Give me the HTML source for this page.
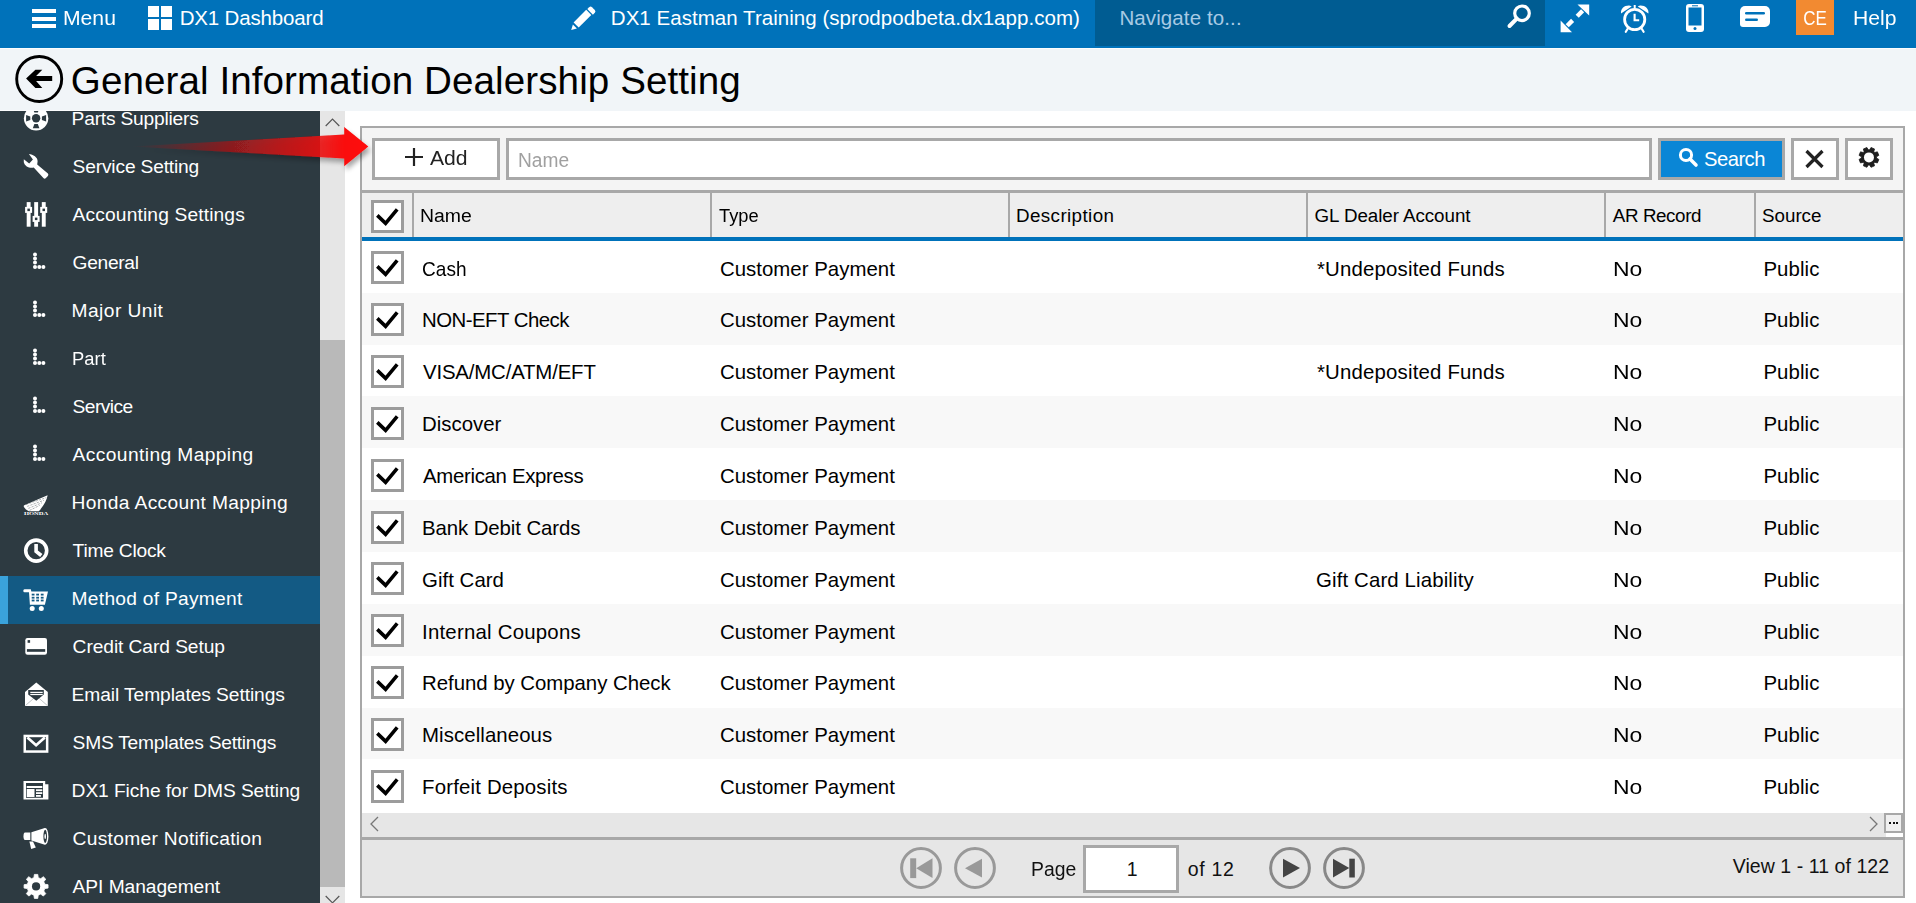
<!DOCTYPE html>
<html><head><meta charset="utf-8"><style>
html,body{margin:0;padding:0;}
body{width:1916px;height:903px;position:relative;overflow:hidden;font-family:"Liberation Sans", sans-serif;background:#fff;}
.t{position:absolute;white-space:nowrap;line-height:1;}
</style></head><body>
<div style="position:absolute;left:0;top:0;width:1916px;height:48px;background:#0072BA"></div>
<div style="position:absolute;left:32px;top:9px;width:23.5px;height:4px;background:#fff"></div>
<div style="position:absolute;left:32px;top:16.5px;width:23.5px;height:4px;background:#fff"></div>
<div style="position:absolute;left:32px;top:24px;width:23.5px;height:4px;background:#fff"></div>
<div class="t" style="left:62.80px;top:7.65px;font-size:20.5px;color:#fff;transform:scaleX(1.0325);transform-origin:1.00px 0;">Menu</div>
<div style="position:absolute;left:148px;top:6px;width:11px;height:11px;background:#fff"></div>
<div style="position:absolute;left:161px;top:6px;width:11px;height:11px;background:#fff"></div>
<div style="position:absolute;left:148px;top:19px;width:11px;height:11px;background:#fff"></div>
<div style="position:absolute;left:161px;top:19px;width:11px;height:11px;background:#fff"></div>
<div class="t" style="left:179.70px;top:7.65px;font-size:20.5px;color:#fff;letter-spacing:-0.163px;">DX1 Dashboard</div>
<svg style="position:absolute;left:560px;top:0px" width="40" height="40" viewBox="560 0 40 40"><path d="M571.2 30 L572.9 24.6 L576.9 28.6 Z" fill="#fff"/><path d="M573.6 22.4 L586.2 9.8 L591.3 14.9 L578.7 27.5 Z" fill="#fff"/><path d="M587.3 9.1 L589.2 7.2 Q590.6 5.9 592 7.2 L594.8 10 Q596.1 11.4 594.8 12.8 L592.9 14.7 Z" fill="#fff"/></svg>
<div class="t" style="left:610.80px;top:7.65px;font-size:20.5px;color:#fff;letter-spacing:0.041px;">DX1 Eastman Training (sprodpodbeta.dx1app.com)</div>
<div style="position:absolute;left:1095px;top:0;width:450px;height:46px;background:#005C92"></div>
<div class="t" style="left:1119.40px;top:7.65px;font-size:20.5px;color:#A8CAE4;letter-spacing:0.108px;">Navigate to...</div>
<svg style="position:absolute;left:1504px;top:2px" width="30" height="30" viewBox="0 0 30 30"><circle cx="18" cy="11.3" r="7.3" fill="none" stroke="#fff" stroke-width="3.2"/><line x1="12.8" y1="16.6" x2="5.5" y2="24" stroke="#fff" stroke-width="4" stroke-linecap="round"/></svg>
<svg style="position:absolute;left:1560px;top:4px" width="30" height="29" viewBox="0 0 30 29"><path d="M17.5 0.4 L29.2 0.4 L29.2 11.6 Z" fill="#fff"/><path d="M22.6 6.8 L17.2 12.2" stroke="#fff" stroke-width="4.4"/><path d="M0.6 28.2 L0.6 16.6 L12 28.2 Z" fill="#fff"/><path d="M7.2 21.8 L12.6 16.4" stroke="#fff" stroke-width="4.4"/></svg>
<svg style="position:absolute;left:1620px;top:4px" width="30" height="30" viewBox="0 0 30 30"><circle cx="14.7" cy="15.5" r="10.1" fill="none" stroke="#fff" stroke-width="2.8"/><path d="M14.6 9.8 V16.2 H19.2" fill="none" stroke="#fff" stroke-width="2.1"/><path d="M1 9.6 C0.4 4.6 4.2 1.2 9.2 1.4 C10.6 1.5 11.4 2 11.6 2.6 Z" fill="#fff"/><path d="M28.4 9.6 C29 4.6 25.2 1.2 20.2 1.4 C18.8 1.5 18 2 17.8 2.6 Z" fill="#fff"/><path d="M7.5 25 L5.8 27.8 M21.9 25 L23.6 27.8" stroke="#fff" stroke-width="2.2" stroke-linecap="round"/><rect x="13.7" y="1" width="2" height="3" fill="#fff"/></svg>
<svg style="position:absolute;left:1686px;top:4px" width="19" height="29" viewBox="0 0 19 29"><rect x="0" y="0" width="18" height="28" rx="3" fill="#fff"/><rect x="2.5" y="3.5" width="13" height="18" fill="#0072BA"/><circle cx="9" cy="24.5" r="1.5" fill="#0072BA"/><rect x="6" y="1.3" width="6" height="1" fill="#0072BA"/></svg>
<svg style="position:absolute;left:1740px;top:6px" width="30" height="23" viewBox="0 0 30 23"><path d="M5 0 H25 A5 5 0 0 1 30 5 V16 A5 5 0 0 1 25 21 H3 A3 3 0 0 1 0 18 V5 A5 5 0 0 1 5 0 Z" fill="#fff"/><rect x="5" y="6" width="20" height="2.6" rx="1.3" fill="#0072BA"/><rect x="5" y="12.5" width="13" height="2.6" rx="1.3" fill="#0072BA"/></svg>
<div style="position:absolute;left:1796px;top:0;width:38px;height:35px;background:#F28A31"></div>
<div class="t" style="left:1802.80px;top:7.85px;font-size:20.5px;color:#fff;transform:scaleX(0.8282);transform-origin:1.00px 0;">CE</div>
<div class="t" style="left:1853.00px;top:7.85px;font-size:20.5px;color:#fff;transform:scaleX(1.0304);transform-origin:1.00px 0;">Help</div>
<div style="position:absolute;left:0;top:48px;width:1916px;height:63px;background:#F1F5F8"></div>
<div style="position:absolute;left:0;top:48px;width:1916px;height:1px;background:#FCFDFE"></div>
<div style="position:absolute;left:0;top:110px;width:320px;height:1px;background:#FAFBFC"></div>
<svg style="position:absolute;left:13px;top:53px" width="52" height="52" viewBox="0 0 52 52"><circle cx="26.2" cy="26" r="22.5" fill="none" stroke="#000" stroke-width="2.9"/><path d="M13.1 25.6 L22.4 16.7 L29.3 16.7 L23.1 22.9 L39.2 22.9 L39.2 28.1 L23.1 28.1 L29.3 34.9 L22.4 34.9 Z" fill="#000"/></svg>
<div class="t" style="left:70.80px;top:62.13px;font-size:38.6px;color:#000;letter-spacing:0.082px;">General Information Dealership Setting</div>
<div style="position:absolute;left:0;top:111px;width:320px;height:792px;background:#2D3A41;overflow:hidden" id="sb">
<div class="t" style="left:71.60px;top:-2.25px;font-size:19.2px;color:#fff;letter-spacing:-0.208px;">Parts Suppliers</div>
<div class="t" style="left:72.60px;top:45.75px;font-size:19.2px;color:#fff;letter-spacing:-0.170px;">Service Setting</div>
<div class="t" style="left:72.60px;top:93.75px;font-size:19.2px;color:#fff;letter-spacing:0.144px;">Accounting Settings</div>
<div class="t" style="left:72.60px;top:141.75px;font-size:19.2px;color:#fff;letter-spacing:-0.316px;">General</div>
<div class="t" style="left:71.60px;top:189.75px;font-size:19.2px;color:#fff;letter-spacing:0.433px;">Major Unit</div>
<div class="t" style="left:71.60px;top:237.75px;font-size:19.2px;color:#fff;transform:scaleX(0.9582);transform-origin:1.00px 0;">Part</div>
<div class="t" style="left:72.60px;top:285.75px;font-size:19.2px;color:#fff;letter-spacing:-0.568px;">Service</div>
<div class="t" style="left:72.60px;top:333.75px;font-size:19.2px;color:#fff;letter-spacing:0.400px;">Accounting Mapping</div>
<div class="t" style="left:71.60px;top:381.75px;font-size:19.2px;color:#fff;letter-spacing:0.347px;">Honda Account Mapping</div>
<div class="t" style="left:72.60px;top:429.75px;font-size:19.2px;color:#fff;letter-spacing:-0.216px;">Time Clock</div>
<div style="position:absolute;left:0;top:465px;width:320px;height:48px;background:#135A84"></div>
<div style="position:absolute;left:0;top:465px;width:8px;height:48px;background:#3AA3DC"></div>
<div class="t" style="left:71.60px;top:477.75px;font-size:19.2px;color:#fff;letter-spacing:0.266px;">Method of Payment</div>
<div class="t" style="left:72.60px;top:525.75px;font-size:19.2px;color:#fff;letter-spacing:-0.075px;">Credit Card Setup</div>
<div class="t" style="left:71.60px;top:573.75px;font-size:19.2px;color:#fff;letter-spacing:-0.079px;">Email Templates Settings</div>
<div class="t" style="left:72.60px;top:621.75px;font-size:19.2px;color:#fff;letter-spacing:-0.235px;">SMS Templates Settings</div>
<div class="t" style="left:71.60px;top:669.75px;font-size:19.2px;color:#fff;letter-spacing:-0.073px;">DX1 Fiche for DMS Setting</div>
<div class="t" style="left:72.60px;top:717.75px;font-size:19.2px;color:#fff;letter-spacing:0.298px;">Customer Notification</div>
<div class="t" style="left:72.60px;top:765.75px;font-size:19.2px;color:#fff;letter-spacing:-0.056px;">API Management</div>
<svg style="position:absolute;left:0;top:-111px" width="320" height="1014" viewBox="0 0 320 1014"><circle cx="36.1" cy="118.3" r="12.2" fill="#fff"/><circle cx="36.1" cy="118.3" r="4.2" fill="#2D3A41"/><path d="M41.90 116.60 L46.10 115.00 L46.10 121.60 L41.90 120.00 Z" fill="#2D3A41"/><path d="M37.80 124.10 L39.40 128.30 L32.80 128.30 L34.40 124.10 Z" fill="#2D3A41"/><path d="M30.30 120.00 L26.10 121.60 L26.10 115.00 L30.30 116.60 Z" fill="#2D3A41"/><path d="M34.40 112.50 L32.80 108.30 L39.40 108.30 L37.80 112.50 Z" fill="#2D3A41"/><path d="M28.9 154.1 C33 154.5 37.9 157.5 37.6 161.5 L37.2 164.6 L47.9 173.6 Q48.9 174.8 47.9 176 L45.7 178.2 Q44.5 179.2 43.4 178.1 L33.7 167.6 C29.5 168.6 25 166.5 23.8 162.2 L23.8 159.2 L29.2 163.6 L32.9 159.5 Z" fill="#fff"/><rect x="26.7" y="202.1" width="3.9" height="24.6" fill="#fff"/><rect x="25.099999999999998" y="206.9" width="7" height="6" fill="#fff"/><rect x="27.4" y="208.6" width="2.5" height="2.5" fill="#2D3A41"/><rect x="34.2" y="202.1" width="3.9" height="24.6" fill="#fff"/><rect x="32.6" y="215.9" width="7" height="6" fill="#fff"/><rect x="34.900000000000006" y="217.6" width="2.5" height="2.5" fill="#2D3A41"/><rect x="41.8" y="202.1" width="3.9" height="24.6" fill="#fff"/><rect x="40.199999999999996" y="206.9" width="7" height="6" fill="#fff"/><rect x="42.5" y="208.6" width="2.5" height="2.5" fill="#2D3A41"/><circle cx="35" cy="254.4" r="2" fill="#fff"/><circle cx="35" cy="258.5" r="2" fill="#fff"/><circle cx="35" cy="262.6" r="2" fill="#fff"/><circle cx="35" cy="267" r="2" fill="#fff"/><circle cx="39.3" cy="267" r="2" fill="#fff"/><circle cx="43.4" cy="267" r="2" fill="#fff"/><circle cx="35" cy="302.4" r="2" fill="#fff"/><circle cx="35" cy="306.5" r="2" fill="#fff"/><circle cx="35" cy="310.6" r="2" fill="#fff"/><circle cx="35" cy="315" r="2" fill="#fff"/><circle cx="39.3" cy="315" r="2" fill="#fff"/><circle cx="43.4" cy="315" r="2" fill="#fff"/><circle cx="35" cy="350.4" r="2" fill="#fff"/><circle cx="35" cy="354.5" r="2" fill="#fff"/><circle cx="35" cy="358.6" r="2" fill="#fff"/><circle cx="35" cy="363" r="2" fill="#fff"/><circle cx="39.3" cy="363" r="2" fill="#fff"/><circle cx="43.4" cy="363" r="2" fill="#fff"/><circle cx="35" cy="398.4" r="2" fill="#fff"/><circle cx="35" cy="402.5" r="2" fill="#fff"/><circle cx="35" cy="406.6" r="2" fill="#fff"/><circle cx="35" cy="411" r="2" fill="#fff"/><circle cx="39.3" cy="411" r="2" fill="#fff"/><circle cx="43.4" cy="411" r="2" fill="#fff"/><circle cx="35" cy="446.4" r="2" fill="#fff"/><circle cx="35" cy="450.5" r="2" fill="#fff"/><circle cx="35" cy="454.6" r="2" fill="#fff"/><circle cx="35" cy="459" r="2" fill="#fff"/><circle cx="39.3" cy="459" r="2" fill="#fff"/><circle cx="43.4" cy="459" r="2" fill="#fff"/><path d="M47.6 495.3 C46.8 499.5 44.5 505 38.8 511.3 L29 511.3 C26 510 24.2 508 23.7 506.3 C23.6 505.6 24 505.2 24.8 504.9 Z" fill="#fff"/><path d="M26.0 504.4 L46.3 497.6" stroke="#2D3A41" stroke-width="0.55" stroke-dasharray="2.2 1.2" opacity="0.75"/><path d="M27.2 506.4 L44.1 500.2" stroke="#2D3A41" stroke-width="0.55" stroke-dasharray="2.2 1.2" opacity="0.75"/><path d="M28.4 508.4 L41.9 502.8" stroke="#2D3A41" stroke-width="0.55" stroke-dasharray="2.2 1.2" opacity="0.75"/><path d="M29.6 510.4 L39.7 505.4" stroke="#2D3A41" stroke-width="0.55" stroke-dasharray="2.2 1.2" opacity="0.75"/><text x="24" y="515" font-family="Liberation Serif" font-weight="bold" font-size="4.6" fill="#fff" textLength="24.2" lengthAdjust="spacingAndGlyphs">HONDA</text><circle cx="36.2" cy="550.6" r="10.5" fill="none" stroke="#fff" stroke-width="3.6"/><path d="M36.1 543.9 V551.3 L41.3 555.5" fill="none" stroke="#fff" stroke-width="3.6"/><path d="M24.5 589.3 H30.8 L31.3 591.6 H48 L44.9 604.8 H29.9 L29 592.3 H24.5 Q23.3 592.3 23.3 590.8 Q23.3 589.3 24.5 589.3 Z" fill="#fff"/><rect x="31.700000000000003" y="593.7" width="2.8" height="1.8" fill="#135A84"/><rect x="31.700000000000003" y="596.8000000000001" width="2.8" height="1.8" fill="#135A84"/><rect x="31.700000000000003" y="599.6" width="2.8" height="1.8" fill="#135A84"/><rect x="36.2" y="593.7" width="2.8" height="1.8" fill="#135A84"/><rect x="36.2" y="596.8000000000001" width="2.8" height="1.8" fill="#135A84"/><rect x="36.2" y="599.6" width="2.8" height="1.8" fill="#135A84"/><rect x="40.800000000000004" y="593.7" width="2.8" height="1.8" fill="#135A84"/><rect x="40.800000000000004" y="596.8000000000001" width="2.8" height="1.8" fill="#135A84"/><rect x="40.800000000000004" y="599.6" width="2.8" height="1.8" fill="#135A84"/><circle cx="32.2" cy="608.4" r="2.5" fill="#fff"/><circle cx="41.3" cy="608.4" r="2.5" fill="#fff"/><rect x="25.3" y="638" width="21.7" height="16.8" rx="2.2" fill="#fff"/><rect x="26.9" y="649.1" width="18.3" height="2.7" fill="#2D3A41"/><rect x="27.6" y="640.1" width="2.5" height="2.7" fill="#2D3A41"/><path d="M36.3 682.6 L47.8 692 V706 H25 V692 Z" fill="#fff"/><path d="M28.2 690 H43.8 V694.5 L36.3 700.7 L28.2 694.5 Z" fill="#2D3A41"/><rect x="30.3" y="691.8" width="12.4" height="1.2" fill="#fff"/><rect x="30.3" y="693.9" width="12.4" height="1.2" fill="#fff"/><path d="M25.5 705.5 L33.5 698.5 M47.3 705.5 L39.3 698.5" stroke="#2D3A41" stroke-width="0.6" opacity="0.5"/><rect x="24.75" y="735.95" width="22.4" height="15.6" fill="none" stroke="#fff" stroke-width="2.5"/><path d="M27.4 737.5 L36.1 745.3 L44.8 737.5" fill="none" stroke="#fff" stroke-width="2.7"/><path d="M23.5 781 H45.2 V784.3 H48.4 V799.5 H23.5 Z" fill="#fff"/><rect x="26" y="783" width="17" height="14.8" fill="#2D3A41"/><rect x="26.7" y="786" width="15.6" height="2" fill="#fff"/><rect x="26.7" y="789" width="7.8" height="8" fill="#fff"/><rect x="36" y="789.3" width="6.3" height="1.8" fill="#fff"/><rect x="36" y="792.2" width="6.3" height="1.8" fill="#fff"/><rect x="36" y="795" width="4.9" height="1.8" fill="#fff"/><path d="M25 832.6 H30.3 V840.1 H25 Q23.5 840.1 23.5 836.35 Q23.5 832.6 25 832.6 Z" fill="#fff"/><path d="M31.4 832.3 L44.8 828 V844.7 L31.4 840.4 Z" fill="#fff"/><ellipse cx="45.2" cy="836.4" rx="3.2" ry="8.3" fill="#fff"/><ellipse cx="45.2" cy="836.4" rx="1.8" ry="6.6" fill="#2D3A41"/><ellipse cx="45.2" cy="836.4" rx="0.8" ry="2.6" fill="#fff"/><path d="M29.4 841.4 H33 L35.8 847.6 L31.2 849 Z" fill="#fff"/><path d="M33.90 877.67 L34.37 874.42 L37.77 874.42 L38.24 877.67 L40.71 878.69 L43.34 876.72 L45.75 879.13 L43.78 881.76 L44.80 884.23 L48.05 884.70 L48.05 888.10 L44.80 888.57 L43.78 891.04 L45.75 893.67 L43.34 896.08 L40.71 894.11 L38.24 895.13 L37.77 898.38 L34.37 898.38 L33.90 895.13 L31.43 894.11 L28.80 896.08 L26.39 893.67 L28.36 891.04 L27.34 888.57 L24.09 888.10 L24.09 884.70 L27.34 884.23 L28.36 881.76 L26.39 879.13 L28.80 876.72 L31.43 878.69 Z" fill="#fff" stroke="#fff" stroke-width="0.8" stroke-linejoin="round"/><circle cx="36.07" cy="886.4" r="4.1" fill="#2D3A41"/></svg>
</div>
<div style="position:absolute;left:320px;top:111px;width:25px;height:792px;background:#E6E6E6"></div>
<div style="position:absolute;left:320px;top:340px;width:25px;height:547px;background:#B9B9B9"></div>
<svg style="position:absolute;left:325px;top:118px" width="15" height="9" viewBox="0 0 15 9"><path d="M0.7 8 L7.5 1.2 L14.3 8" fill="none" stroke="#555" stroke-width="1.2"/></svg>
<svg style="position:absolute;left:325px;top:895px" width="15" height="9" viewBox="0 0 15 9"><path d="M0.7 1 L7.5 7.8 L14.3 1" fill="none" stroke="#555" stroke-width="1.2"/></svg>
<div style="position:absolute;left:345px;top:111px;width:1571px;height:792px;background:#fff"></div>
<div style="position:absolute;left:360px;top:126px;width:1545px;height:772px;box-sizing:border-box;border:2px solid #A8A8A8;background:#fff"></div>
<div style="position:absolute;left:362px;top:128px;width:1541px;height:62px;background:#F4F4F4"></div>
<div style="position:absolute;left:362px;top:190px;width:1541px;height:2.6px;background:#A8A8A8"></div>
<div style="position:absolute;left:372px;top:138px;width:128px;height:42px;box-sizing:border-box;border:3px solid #A8A8A8;background:#fff"></div>
<svg style="position:absolute;left:404px;top:147px" width="20" height="20" viewBox="0 0 20 20"><path d="M10 1 V19 M1 10 H19" stroke="#222" stroke-width="2.2"/></svg>
<div class="t" style="left:429.80px;top:148.45px;font-size:20.5px;color:#222;transform:scaleX(1.0312);transform-origin:0.00px 0;">Add</div>
<div style="position:absolute;left:506px;top:138px;width:1146px;height:42px;box-sizing:border-box;border:3px solid #A8A8A8;background:#fff"></div>
<div class="t" style="left:517.50px;top:150.61px;font-size:19.6px;color:#A0A0A0;transform:scaleX(0.9772);transform-origin:1.00px 0;">Name</div>
<div style="position:absolute;left:1658px;top:138px;width:127px;height:42px;box-sizing:border-box;border:3px solid #A8A8A8;background:#0A86D6"></div>
<svg style="position:absolute;left:1678px;top:147px" width="21" height="21" viewBox="0 0 21 21"><circle cx="8" cy="8" r="5.6" fill="none" stroke="#fff" stroke-width="3"/><line x1="12" y1="12" x2="18" y2="18" stroke="#fff" stroke-width="3.6" stroke-linecap="round"/></svg>
<div class="t" style="left:1704.00px;top:148.70px;font-size:20.2px;color:#fff;letter-spacing:-0.507px;">Search</div>
<div style="position:absolute;left:1791px;top:138px;width:48px;height:42px;box-sizing:border-box;border:3px solid #A8A8A8;background:#fff"></div>
<svg style="position:absolute;left:1804px;top:149px" width="21" height="20" viewBox="0 0 21 20"><path d="M2.5 2 L18.5 18 M18.5 2 L2.5 18" stroke="#222" stroke-width="3.2"/></svg>
<div style="position:absolute;left:1845px;top:138px;width:48px;height:42px;box-sizing:border-box;border:3px solid #A8A8A8;background:#fff"></div>
<svg style="position:absolute;left:1850px;top:140px" width="38" height="36" viewBox="0 0 38 36"><path d="M19.61 9.83 L21.00 7.51 L24.50 8.96 L23.84 11.58 L24.77 12.51 L27.39 11.85 L28.84 15.35 L26.52 16.74 L26.52 18.06 L28.84 19.45 L27.39 22.95 L24.77 22.29 L23.84 23.22 L24.50 25.84 L21.00 27.29 L19.61 24.97 L18.29 24.97 L16.90 27.29 L13.40 25.84 L14.06 23.22 L13.13 22.29 L10.51 22.95 L9.06 19.45 L11.38 18.06 L11.38 16.74 L9.06 15.35 L10.51 11.85 L13.13 12.51 L14.06 11.58 L13.40 8.96 L16.90 7.51 L18.29 9.83 Z" fill="#1E1E1E" stroke="#1E1E1E" stroke-width="0.8" stroke-linejoin="round"/><circle cx="18.950000000000045" cy="17.400000000000006" r="5.0" fill="#fff"/></svg>
<div style="position:absolute;left:362px;top:192.6px;width:1541px;height:44.4px;background:#EEEEEE"></div>
<div style="position:absolute;left:362px;top:237px;width:1541px;height:3.6px;background:#0072BA"></div>
<div style="position:absolute;left:371px;top:200px;width:33px;height:33px;box-sizing:border-box;border:3px solid #9C9C9C;background:#fff"></div><svg style="position:absolute;left:371px;top:200px" width="33" height="33" viewBox="0 0 33 33"><path d="M6.3 15.4 L14.6 23.3 L26.2 9.3" fill="none" stroke="#000" stroke-width="3.6"/></svg>
<div style="position:absolute;left:412px;top:193px;width:2px;height:44px;background:#A8A8A8"></div>
<div class="t" style="left:419.90px;top:207.09px;font-size:18.8px;color:#000;transform:scaleX(1.0338);transform-origin:1.00px 0;">Name</div>
<div style="position:absolute;left:710px;top:193px;width:2px;height:44px;background:#A8A8A8"></div>
<div class="t" style="left:719.00px;top:207.09px;font-size:18.8px;color:#000;transform:scaleX(0.9734);transform-origin:0.00px 0;">Type</div>
<div style="position:absolute;left:1008px;top:193px;width:2px;height:44px;background:#A8A8A8"></div>
<div class="t" style="left:1016.00px;top:207.09px;font-size:18.8px;color:#000;letter-spacing:0.400px;">Description</div>
<div style="position:absolute;left:1306px;top:193px;width:2px;height:44px;background:#A8A8A8"></div>
<div class="t" style="left:1314.50px;top:207.09px;font-size:18.8px;color:#000;letter-spacing:-0.060px;">GL Dealer Account</div>
<div style="position:absolute;left:1604px;top:193px;width:2px;height:44px;background:#A8A8A8"></div>
<div class="t" style="left:1612.80px;top:207.09px;font-size:18.8px;color:#000;letter-spacing:-0.401px;">AR Record</div>
<div style="position:absolute;left:1754px;top:193px;width:2px;height:44px;background:#A8A8A8"></div>
<div class="t" style="left:1762.00px;top:207.09px;font-size:18.8px;color:#000;letter-spacing:-0.012px;">Source</div>
<div style="position:absolute;left:362px;top:240.8px;width:1541px;height:51.86px;background:#fff"></div>
<div style="position:absolute;left:371px;top:251.0px;width:33px;height:33px;box-sizing:border-box;border:3px solid #9C9C9C;background:#fff"></div><svg style="position:absolute;left:371px;top:251.0px" width="33" height="33" viewBox="0 0 33 33"><path d="M6.3 15.4 L14.6 23.3 L26.2 9.3" fill="none" stroke="#000" stroke-width="3.6"/></svg>
<div class="t" style="left:422.00px;top:258.53px;font-size:20.4px;color:#000;transform:scaleX(0.9338);transform-origin:1.00px 0;">Cash</div>
<div class="t" style="left:719.90px;top:258.53px;font-size:20.4px;color:#000;letter-spacing:0.030px;">Customer Payment</div>
<div class="t" style="left:1317.00px;top:258.53px;font-size:20.4px;color:#000;letter-spacing:0.178px;">*Undeposited Funds</div>
<div class="t" style="left:1613.40px;top:258.53px;font-size:20.4px;color:#000;transform:scaleX(1.1243);transform-origin:1.00px 0;">No</div>
<div class="t" style="left:1763.40px;top:258.53px;font-size:20.4px;color:#000;letter-spacing:0.092px;">Public</div>
<div style="position:absolute;left:362px;top:292.66px;width:1541px;height:51.86px;background:#F8F8F8"></div>
<div style="position:absolute;left:371px;top:302.9px;width:33px;height:33px;box-sizing:border-box;border:3px solid #9C9C9C;background:#fff"></div><svg style="position:absolute;left:371px;top:302.9px" width="33" height="33" viewBox="0 0 33 33"><path d="M6.3 15.4 L14.6 23.3 L26.2 9.3" fill="none" stroke="#000" stroke-width="3.6"/></svg>
<div class="t" style="left:422.00px;top:310.39px;font-size:20.4px;color:#000;letter-spacing:-0.523px;">NON-EFT Check</div>
<div class="t" style="left:719.90px;top:310.39px;font-size:20.4px;color:#000;letter-spacing:0.030px;">Customer Payment</div>
<div class="t" style="left:1613.40px;top:310.39px;font-size:20.4px;color:#000;transform:scaleX(1.1243);transform-origin:1.00px 0;">No</div>
<div class="t" style="left:1763.40px;top:310.39px;font-size:20.4px;color:#000;letter-spacing:0.092px;">Public</div>
<div style="position:absolute;left:362px;top:344.52px;width:1541px;height:51.86px;background:#fff"></div>
<div style="position:absolute;left:371px;top:354.8px;width:33px;height:33px;box-sizing:border-box;border:3px solid #9C9C9C;background:#fff"></div><svg style="position:absolute;left:371px;top:354.8px" width="33" height="33" viewBox="0 0 33 33"><path d="M6.3 15.4 L14.6 23.3 L26.2 9.3" fill="none" stroke="#000" stroke-width="3.6"/></svg>
<div class="t" style="left:423.00px;top:362.25px;font-size:20.4px;color:#000;letter-spacing:-0.168px;">VISA/MC/ATM/EFT</div>
<div class="t" style="left:719.90px;top:362.25px;font-size:20.4px;color:#000;letter-spacing:0.030px;">Customer Payment</div>
<div class="t" style="left:1317.00px;top:362.25px;font-size:20.4px;color:#000;letter-spacing:0.178px;">*Undeposited Funds</div>
<div class="t" style="left:1613.40px;top:362.25px;font-size:20.4px;color:#000;transform:scaleX(1.1243);transform-origin:1.00px 0;">No</div>
<div class="t" style="left:1763.40px;top:362.25px;font-size:20.4px;color:#000;letter-spacing:0.092px;">Public</div>
<div style="position:absolute;left:362px;top:396.38px;width:1541px;height:51.86px;background:#F8F8F8"></div>
<div style="position:absolute;left:371px;top:406.7px;width:33px;height:33px;box-sizing:border-box;border:3px solid #9C9C9C;background:#fff"></div><svg style="position:absolute;left:371px;top:406.7px" width="33" height="33" viewBox="0 0 33 33"><path d="M6.3 15.4 L14.6 23.3 L26.2 9.3" fill="none" stroke="#000" stroke-width="3.6"/></svg>
<div class="t" style="left:422.00px;top:414.11px;font-size:20.4px;color:#000;">Discover</div>
<div class="t" style="left:719.90px;top:414.11px;font-size:20.4px;color:#000;letter-spacing:0.030px;">Customer Payment</div>
<div class="t" style="left:1613.40px;top:414.11px;font-size:20.4px;color:#000;transform:scaleX(1.1243);transform-origin:1.00px 0;">No</div>
<div class="t" style="left:1763.40px;top:414.11px;font-size:20.4px;color:#000;letter-spacing:0.092px;">Public</div>
<div style="position:absolute;left:362px;top:448.24px;width:1541px;height:51.86px;background:#fff"></div>
<div style="position:absolute;left:371px;top:458.6px;width:33px;height:33px;box-sizing:border-box;border:3px solid #9C9C9C;background:#fff"></div><svg style="position:absolute;left:371px;top:458.6px" width="33" height="33" viewBox="0 0 33 33"><path d="M6.3 15.4 L14.6 23.3 L26.2 9.3" fill="none" stroke="#000" stroke-width="3.6"/></svg>
<div class="t" style="left:423.00px;top:465.97px;font-size:20.4px;color:#000;letter-spacing:-0.317px;">American Express</div>
<div class="t" style="left:719.90px;top:465.97px;font-size:20.4px;color:#000;letter-spacing:0.030px;">Customer Payment</div>
<div class="t" style="left:1613.40px;top:465.97px;font-size:20.4px;color:#000;transform:scaleX(1.1243);transform-origin:1.00px 0;">No</div>
<div class="t" style="left:1763.40px;top:465.97px;font-size:20.4px;color:#000;letter-spacing:0.092px;">Public</div>
<div style="position:absolute;left:362px;top:500.1px;width:1541px;height:51.86px;background:#F8F8F8"></div>
<div style="position:absolute;left:371px;top:510.5px;width:33px;height:33px;box-sizing:border-box;border:3px solid #9C9C9C;background:#fff"></div><svg style="position:absolute;left:371px;top:510.5px" width="33" height="33" viewBox="0 0 33 33"><path d="M6.3 15.4 L14.6 23.3 L26.2 9.3" fill="none" stroke="#000" stroke-width="3.6"/></svg>
<div class="t" style="left:422.00px;top:517.83px;font-size:20.4px;color:#000;letter-spacing:-0.087px;">Bank Debit Cards</div>
<div class="t" style="left:719.90px;top:517.83px;font-size:20.4px;color:#000;letter-spacing:0.030px;">Customer Payment</div>
<div class="t" style="left:1613.40px;top:517.83px;font-size:20.4px;color:#000;transform:scaleX(1.1243);transform-origin:1.00px 0;">No</div>
<div class="t" style="left:1763.40px;top:517.83px;font-size:20.4px;color:#000;letter-spacing:0.092px;">Public</div>
<div style="position:absolute;left:362px;top:551.96px;width:1541px;height:51.86px;background:#fff"></div>
<div style="position:absolute;left:371px;top:562.4px;width:33px;height:33px;box-sizing:border-box;border:3px solid #9C9C9C;background:#fff"></div><svg style="position:absolute;left:371px;top:562.4px" width="33" height="33" viewBox="0 0 33 33"><path d="M6.3 15.4 L14.6 23.3 L26.2 9.3" fill="none" stroke="#000" stroke-width="3.6"/></svg>
<div class="t" style="left:422.00px;top:569.69px;font-size:20.4px;color:#000;letter-spacing:0.045px;">Gift Card</div>
<div class="t" style="left:719.90px;top:569.69px;font-size:20.4px;color:#000;letter-spacing:0.030px;">Customer Payment</div>
<div class="t" style="left:1316.00px;top:569.69px;font-size:20.4px;color:#000;letter-spacing:0.136px;">Gift Card Liability</div>
<div class="t" style="left:1613.40px;top:569.69px;font-size:20.4px;color:#000;transform:scaleX(1.1243);transform-origin:1.00px 0;">No</div>
<div class="t" style="left:1763.40px;top:569.69px;font-size:20.4px;color:#000;letter-spacing:0.092px;">Public</div>
<div style="position:absolute;left:362px;top:603.8199999999999px;width:1541px;height:51.86px;background:#F8F8F8"></div>
<div style="position:absolute;left:371px;top:614.3px;width:33px;height:33px;box-sizing:border-box;border:3px solid #9C9C9C;background:#fff"></div><svg style="position:absolute;left:371px;top:614.3px" width="33" height="33" viewBox="0 0 33 33"><path d="M6.3 15.4 L14.6 23.3 L26.2 9.3" fill="none" stroke="#000" stroke-width="3.6"/></svg>
<div class="t" style="left:422.00px;top:621.55px;font-size:20.4px;color:#000;letter-spacing:0.226px;">Internal Coupons</div>
<div class="t" style="left:719.90px;top:621.55px;font-size:20.4px;color:#000;letter-spacing:0.030px;">Customer Payment</div>
<div class="t" style="left:1613.40px;top:621.55px;font-size:20.4px;color:#000;transform:scaleX(1.1243);transform-origin:1.00px 0;">No</div>
<div class="t" style="left:1763.40px;top:621.55px;font-size:20.4px;color:#000;letter-spacing:0.092px;">Public</div>
<div style="position:absolute;left:362px;top:655.6800000000001px;width:1541px;height:51.86px;background:#fff"></div>
<div style="position:absolute;left:371px;top:666.2px;width:33px;height:33px;box-sizing:border-box;border:3px solid #9C9C9C;background:#fff"></div><svg style="position:absolute;left:371px;top:666.2px" width="33" height="33" viewBox="0 0 33 33"><path d="M6.3 15.4 L14.6 23.3 L26.2 9.3" fill="none" stroke="#000" stroke-width="3.6"/></svg>
<div class="t" style="left:422.00px;top:673.41px;font-size:20.4px;color:#000;letter-spacing:-0.034px;">Refund by Company Check</div>
<div class="t" style="left:719.90px;top:673.41px;font-size:20.4px;color:#000;letter-spacing:0.030px;">Customer Payment</div>
<div class="t" style="left:1613.40px;top:673.41px;font-size:20.4px;color:#000;transform:scaleX(1.1243);transform-origin:1.00px 0;">No</div>
<div class="t" style="left:1763.40px;top:673.41px;font-size:20.4px;color:#000;letter-spacing:0.092px;">Public</div>
<div style="position:absolute;left:362px;top:707.54px;width:1541px;height:51.86px;background:#F8F8F8"></div>
<div style="position:absolute;left:371px;top:718.0999999999999px;width:33px;height:33px;box-sizing:border-box;border:3px solid #9C9C9C;background:#fff"></div><svg style="position:absolute;left:371px;top:718.0999999999999px" width="33" height="33" viewBox="0 0 33 33"><path d="M6.3 15.4 L14.6 23.3 L26.2 9.3" fill="none" stroke="#000" stroke-width="3.6"/></svg>
<div class="t" style="left:422.00px;top:725.27px;font-size:20.4px;color:#000;letter-spacing:0.083px;">Miscellaneous</div>
<div class="t" style="left:719.90px;top:725.27px;font-size:20.4px;color:#000;letter-spacing:0.030px;">Customer Payment</div>
<div class="t" style="left:1613.40px;top:725.27px;font-size:20.4px;color:#000;transform:scaleX(1.1243);transform-origin:1.00px 0;">No</div>
<div class="t" style="left:1763.40px;top:725.27px;font-size:20.4px;color:#000;letter-spacing:0.092px;">Public</div>
<div style="position:absolute;left:362px;top:759.4000000000001px;width:1541px;height:51.86px;background:#fff"></div>
<div style="position:absolute;left:371px;top:770.0px;width:33px;height:33px;box-sizing:border-box;border:3px solid #9C9C9C;background:#fff"></div><svg style="position:absolute;left:371px;top:770.0px" width="33" height="33" viewBox="0 0 33 33"><path d="M6.3 15.4 L14.6 23.3 L26.2 9.3" fill="none" stroke="#000" stroke-width="3.6"/></svg>
<div class="t" style="left:422.00px;top:777.13px;font-size:20.4px;color:#000;letter-spacing:0.181px;">Forfeit Deposits</div>
<div class="t" style="left:719.90px;top:777.13px;font-size:20.4px;color:#000;letter-spacing:0.030px;">Customer Payment</div>
<div class="t" style="left:1613.40px;top:777.13px;font-size:20.4px;color:#000;transform:scaleX(1.1243);transform-origin:1.00px 0;">No</div>
<div class="t" style="left:1763.40px;top:777.13px;font-size:20.4px;color:#000;letter-spacing:0.092px;">Public</div>
<div style="position:absolute;left:362px;top:812.6px;width:1541px;height:24.4px;background:#E6E6E6"></div>
<svg style="position:absolute;left:369px;top:816px" width="11" height="16" viewBox="0 0 11 16"><path d="M9 1 L2 8 L9 15" fill="none" stroke="#777" stroke-width="1.3"/></svg>
<svg style="position:absolute;left:1868px;top:816px" width="11" height="16" viewBox="0 0 11 16"><path d="M2 1 L9 8 L2 15" fill="none" stroke="#777" stroke-width="1.3"/></svg>
<div style="position:absolute;left:1884px;top:813px;width:19px;height:19.5px;box-sizing:border-box;border:2px solid #A8A8A8;background:#F0F0F0"></div>
<div style="position:absolute;left:1886px;top:832.5px;width:17px;height:4.5px;background:#fff"></div>
<div style="position:absolute;left:1889.2px;top:822.3px;width:2px;height:2.2px;background:#111"></div>
<div style="position:absolute;left:1892.8px;top:822.3px;width:2px;height:2.2px;background:#111"></div>
<div style="position:absolute;left:1896.4px;top:822.3px;width:2px;height:2.2px;background:#111"></div>
<div style="position:absolute;left:362px;top:837px;width:1541px;height:3px;background:#A8A8A8"></div>
<div style="position:absolute;left:362px;top:840px;width:1541px;height:56px;background:#E6E6E6"></div>
<svg style="position:absolute;left:898.8px;top:845.7px" width="44" height="44" viewBox="0 0 44 44"><circle cx="22" cy="22" r="19.4" fill="none" stroke="#999" stroke-width="3"/><rect x="11.2" y="12.3" width="6" height="19.8" fill="#999"/><path d="M17.2 22.2 L33.5 12.3 L33.5 32.1 Z" fill="#999"/></svg>
<svg style="position:absolute;left:953px;top:845.7px" width="44" height="44" viewBox="0 0 44 44"><circle cx="22" cy="22" r="19.4" fill="none" stroke="#999" stroke-width="3"/><path d="M12 22.2 L29 12.8 L29 31.6 Z" fill="#999"/></svg>
<div class="t" style="left:1031.00px;top:859.79px;font-size:19.5px;color:#111;transform:scaleX(0.9932);transform-origin:1.00px 0;">Page</div>
<div style="position:absolute;left:1083px;top:845px;width:96px;height:48px;box-sizing:border-box;border:3px solid #A8A8A8;background:#fff"></div>
<div class="t" style="left:1126.80px;top:860.49px;font-size:19.5px;color:#111;">1</div>
<div class="t" style="left:1187.70px;top:860.49px;font-size:19.5px;color:#111;letter-spacing:0.694px;">of 12</div>
<svg style="position:absolute;left:1268px;top:845.8px" width="44" height="44" viewBox="0 0 44 44"><circle cx="22" cy="22" r="19.4" fill="none" stroke="#888" stroke-width="3"/><path d="M15 12.7 L32 22.1 L15 31.5 Z" fill="#444"/></svg>
<svg style="position:absolute;left:1322px;top:845.8px" width="44" height="44" viewBox="0 0 44 44"><circle cx="22" cy="22" r="19.4" fill="none" stroke="#888" stroke-width="3"/><path d="M11 12.7 L27.3 22.1 L11 31.5 Z" fill="#444"/><rect x="27.3" y="12.7" width="5.5" height="18.8" fill="#444"/></svg>
<div class="t" style="left:1732.70px;top:857.19px;font-size:19.5px;color:#111;letter-spacing:0.057px;">View 1 - 11 of 122</div>
<svg style="position:absolute;left:0;top:0;overflow:visible" width="400" height="200" viewBox="0 0 400 200"><defs><linearGradient id="ag" gradientUnits="userSpaceOnUse" x1="131.5" y1="0" x2="368.3" y2="0"><stop offset="0" stop-color="rgb(225,12,12)" stop-opacity="0"/><stop offset="0.3" stop-color="rgb(225,12,12)" stop-opacity="0.35"/><stop offset="0.62" stop-color="rgb(228,12,12)" stop-opacity="0.72"/><stop offset="0.8" stop-color="rgb(238,12,12)" stop-opacity="0.86"/><stop offset="0.9" stop-color="rgb(250,10,10)" stop-opacity="1"/><stop offset="1" stop-color="rgb(255,8,8)" stop-opacity="1"/></linearGradient><filter id="ash" x="-10%" y="-50%" width="130%" height="220%"><feGaussianBlur in="SourceAlpha" stdDeviation="2.5"/><feOffset dx="2" dy="4" result="b"/><feComponentTransfer><feFuncA type="linear" slope="0.35"/></feComponentTransfer><feMerge><feMergeNode/><feMergeNode in="SourceGraphic"/></feMerge></filter></defs><path d="M131.5 146.5 L344.2 134.6 L344.2 127 L368.3 146.5 L344.2 166.3 L344.2 158.4 Z" fill="url(#ag)" filter="url(#ash)"/></svg>

</body></html>
